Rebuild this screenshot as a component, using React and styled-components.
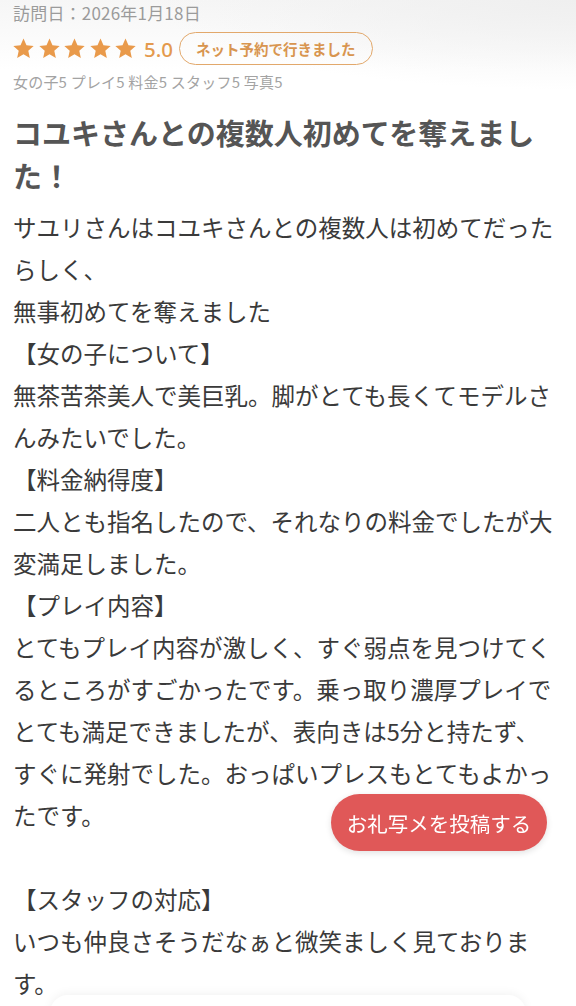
import React from "react";
import styled, { createGlobalStyle } from "styled-components";

const Global = createGlobalStyle`
  html, body { margin: 0; padding: 0; background: #fff; }
  body {
    font-family: "Noto Sans CJK JP", "Noto Sans", sans-serif;
    -webkit-font-smoothing: antialiased;
  }
`;

const Page = styled.div`
  min-height: 1006px;
  box-sizing: border-box;
  padding: 0 18px 40px 13px;
  background:
    radial-gradient(ellipse 420px 90px at 100% 0%, #efefef 0%, rgba(255,255,255,0) 100%),
    linear-gradient(180deg, #f6f6f6 0px, #ffffff 70px);
  overflow: hidden;
`;

const VisitDate = styled.div`
  font-size: 17px;
  line-height: 24px;
  color: #9b9b9b;
  margin-top: 1px;
  letter-spacing: 0.2px;
`;

const RatingRow = styled.div`
  display: flex;
  align-items: center;
  margin-top: 7px;
  height: 33px;
`;

const Stars = styled.div`
  display: flex;
  gap: 2.5px;
  margin-left: -1px;
`;

const Score = styled.span`
  font-size: 20.5px;
  font-weight: 500;
  color: #e49a4e;
  margin-left: 7px;
  margin-right: 6px;
  font-family: "Noto Sans", sans-serif;
`;

const Badge = styled.span`
  display: inline-flex;
  align-items: center;
  height: 33px;
  box-sizing: border-box;
  padding: 0 16px;
  border: 1.5px solid #e2a86b;
  border-radius: 17px;
  font-size: 14.5px;
  font-weight: 700;
  color: #d8954f;
`;

const SubRatings = styled.div`
  margin-top: 7px;
  font-size: 15px;
  line-height: 20px;
  color: #a3a3a3;
  letter-spacing: 0.2px;
`;

const Title = styled.h1`
  margin: 19px 0 0 0;
  font-size: 29px;
  line-height: 43px;
  font-weight: 700;
  color: #555555;
`;

const Body = styled.div`
  margin-top: 9px;
  font-size: 23.5px;
  line-height: 42px;
  color: #3a3a3a;
`;

const Line = styled.p`
  margin: 0;
  min-height: 42px;
`;

const PostButton = styled.button`
  position: fixed;
  right: 29px;
  bottom: 155px;
  width: 216px;
  height: 57px;
  padding: 0;
  border: none;
  border-radius: 29px;
  background: #e05858;
  color: #fff;
  font-family: "Noto Sans CJK JP", sans-serif;
  font-size: 20.5px;
  box-shadow: 0 2px 6px rgba(0, 0, 0, 0.12);
  cursor: pointer;
`;

const BottomCard = styled.div`
  position: fixed;
  left: 50px;
  right: 50px;
  bottom: -60px;
  height: 71px;
  border-radius: 18px;
  background: #fff;
  box-shadow: 0 -2px 10px rgba(0, 0, 0, 0.05);
`;

const Star = () => (
  <svg width="23" height="23" viewBox="0 0 24 24">
    <path
      d="M12 1.6l3.1 6.9 7.5.8-5.6 5.1 1.6 7.4L12 18l-6.6 3.8L7 14.4 1.4 9.3l7.5-.8z"
      fill="#e99a4b"
    />
  </svg>
);

const lines = [
  "サユリさんはコユキさんとの複数人は初めてだったらしく、",
  "無事初めてを奪えました",
  "【女の子について】",
  "無茶苦茶美人で美巨乳。脚がとても長くてモデルさんみたいでした。",
  "【料金納得度】",
  "二人とも指名したので、それなりの料金でしたが大変満足しました。",
  "【プレイ内容】",
  "とてもプレイ内容が激しく、すぐ弱点を見つけてくるところがすごかったです。乗っ取り濃厚プレイでとても満足できましたが、表向きは5分と持たず、すぐに発射でした。おっぱいプレスもとてもよかったです。",
  "",
  "【スタッフの対応】",
  "いつも仲良さそうだなぁと微笑ましく見ております。",
];

export default function App() {
  return (
    <>
      <Global />
      <Page>
        <VisitDate>訪問日：2026年1月18日</VisitDate>
        <RatingRow>
          <Stars>
            {[0, 1, 2, 3, 4].map((i) => (
              <Star key={i} />
            ))}
          </Stars>
          <Score>5.0</Score>
          <Badge>ネット予約で行きました</Badge>
        </RatingRow>
        <SubRatings>女の子5 プレイ5 料金5 スタッフ5 写真5</SubRatings>
        <Title>コユキさんとの複数人初めてを奪えました！</Title>
        <Body>
          {lines.map((l, i) => (
            <Line key={i}>{l}</Line>
          ))}
        </Body>
      </Page>
      <PostButton>お礼写メを投稿する</PostButton>
      <BottomCard />
    </>
  );
}
